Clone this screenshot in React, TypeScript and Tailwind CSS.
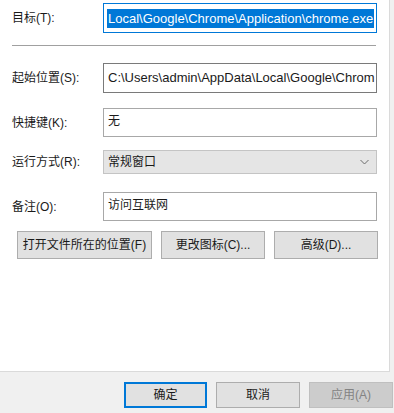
const font = { fontFamily: '"Liberation Sans", "Noto Sans CJK SC", sans-serif' };

const Label = ({ children }: { children: React.ReactNode }) => (
    <div className="w-[91px] shrink-0 text-[12px] text-[#1a1a1a]">{children}</div>
);

export default function App() {
    return (
        <div className="w-[394px] h-[413px] bg-[#f0f0f0] flex flex-col overflow-hidden" style={font}>
            <div className="w-[390px] h-[372px] shrink-0 bg-white border-r border-b border-[#dadada] flex flex-col pl-[12px]">
                {/* 目标 */}
                <div className="flex items-center mt-[3px] h-[30px]">
                    <Label>目标(T):</Label>
                    <div className="w-[274px] h-[30px] border border-[#0078d7] flex items-center pl-[3px]">
                        <span className="bg-[#0078d7] text-white text-[13px] leading-[19px] px-[1px] whitespace-nowrap">Local\Google\Chrome\Application\chrome.exe</span>
                    </div>
                </div>

                <div className="mt-[12px] w-[364px] h-px bg-[#a0a0a0]" />

                {/* 起始位置 */}
                <div className="flex items-center mt-[17px]">
                    <Label>起始位置(S):</Label>
                    <div className="w-[274px] h-[30px] border border-[#7a7a7a] flex items-center pl-[4px] overflow-hidden">
                        <span className="text-[13px] text-[#1a1a1a] whitespace-nowrap">C:\Users\admin\AppData\Local\Google\Chrom</span>
                    </div>
                </div>

                {/* 快捷键 */}
                <div className="flex items-center mt-[15px]">
                    <Label>快捷键(K):</Label>
                    <div className="w-[274px] h-[29px] border border-[#a8a8a8] flex items-start pt-[3px] pl-[4px]">
                        <span className="text-[12px] text-[#1a1a1a]">无</span>
                    </div>
                </div>

                {/* 运行方式 */}
                <div className="flex items-center mt-[13px]">
                    <Label>运行方式(R):</Label>
                    <div className="w-[274px] h-[24px] border border-[#c4c4c4] bg-[#e5e5e5] flex items-center justify-between pl-[4px] pr-[7px]">
                        <span className="text-[12px] text-[#1a1a1a]">常规窗口</span>
                        <svg width="9" height="6" viewBox="0 0 9 6" fill="none" stroke="#6d6d6d" strokeWidth="1">
                            <path d="M0.5 1 L4.5 5 L8.5 1" />
                        </svg>
                    </div>
                </div>

                {/* 备注 */}
                <div className="flex items-center mt-[18px]">
                    <Label>备注(O):</Label>
                    <div className="w-[274px] h-[29px] border border-[#a8a8a8] flex items-start pt-[3px] pl-[4px]">
                        <span className="text-[12px] text-[#1a1a1a]">访问互联网</span>
                    </div>
                </div>

                {/* 按钮 */}
                <div className="flex mt-[10px] ml-[5px] gap-[9px]">
                    <button className="w-[135px] h-[28px] bg-[#e1e1e1] border border-[#adadad] text-[12px] text-[#1a1a1a]">打开文件所在的位置(F)</button>
                    <button className="w-[104px] h-[28px] bg-[#e1e1e1] border border-[#adadad] text-[12px] text-[#1a1a1a]">更改图标(C)...</button>
                    <button className="w-[104px] h-[28px] bg-[#e1e1e1] border border-[#adadad] text-[12px] text-[#1a1a1a]">高级(D)...</button>
                </div>
            </div>

            <div className="flex mt-[10px] ml-[124px] gap-[9px]">
                <button className="w-[83px] h-[26px] bg-[#e1e1e1] border-2 border-[#0078d7] text-[12px] text-[#1a1a1a]">确定</button>
                <button className="w-[84px] h-[26px] bg-[#e1e1e1] border border-[#adadad] text-[12px] text-[#1a1a1a]">取消</button>
                <button className="w-[84px] h-[26px] bg-[#cccccc] border border-[#bfbfbf] text-[12px] text-[#838383]">应用(A)</button>
            </div>
        </div>
    );
}
